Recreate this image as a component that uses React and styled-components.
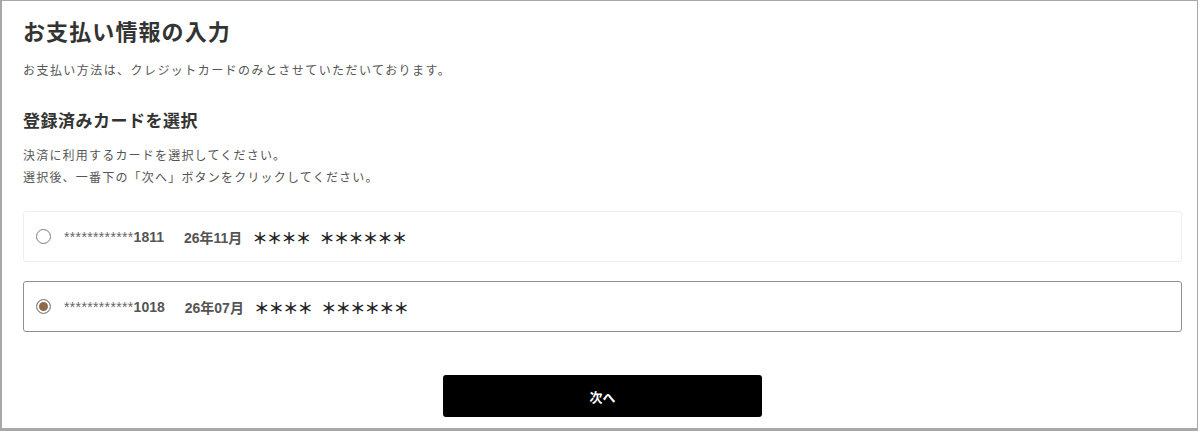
import React, { useState } from "react";
import styled, { createGlobalStyle } from "styled-components";

const GlobalStyle = createGlobalStyle`
  * { box-sizing: border-box; }
  body {
    margin: 0;
    background: #fff;
    font-family: "Noto Sans CJK JP", "Liberation Sans", sans-serif;
  }
`;

const Frame = styled.div`
  width: 1198px;
  height: 431px;
  border-style: solid;
  border-color: #a8a8a8;
  border-width: 1px 1px 3px 2px;
  padding: 14px 15px 0 21px;
  overflow: hidden;
`;

const Title = styled.h1`
  margin: 0;
  font-size: 22px;
  line-height: 30px;
  font-weight: 700;
  letter-spacing: 0.05em;
  color: #333;
`;

const Lead = styled.p`
  margin: 15px 0 0;
  font-size: 12px;
  line-height: 20px;
  letter-spacing: 0.12em;
  color: #555;
`;

const Heading = styled.h2`
  margin: 28px 0 0;
  font-size: 17px;
  line-height: 24px;
  font-weight: 700;
  letter-spacing: 0.03em;
  color: #333;
`;

const Note = styled.p`
  margin: 12px 0 0;
  font-size: 12px;
  line-height: 22px;
  letter-spacing: 0.1em;
  color: #555;
`;

const CardList = styled.div`
  margin-top: 23px;
  display: flex;
  flex-direction: column;
  gap: 19px;
`;

const CardRow = styled.label`
  height: 51px;
  display: flex;
  align-items: center;
  gap: 13px;
  padding: 0 12px;
  border: 1px solid ${(p) => (p.$active ? "#8f8f8f" : "#eeeeee")};
  border-radius: 3px;
  cursor: pointer;
`;

const Radio = styled.input`
  appearance: none;
  margin: 0;
  width: 15px;
  height: 15px;
  border-radius: 50%;
  border: 1px solid #7a7a7a;
  background: #fff;
  flex-shrink: 0;

  &:checked {
    background: #8e6a4c;
    box-shadow: inset 0 0 0 2px #fff;
    border-color: #8a8a8a;
  }
`;

const CardText = styled.span`
  display: flex;
  align-items: center;
  font-family: "Liberation Sans", Arial, sans-serif;
  font-size: 14px;
  font-weight: 700;
  color: #555;
  white-space: pre;
`;

const Mask = styled.span`
  font-weight: 400;
  font-size: 14px;
  color: #666;
  letter-spacing: 0.35px;
`;

const Expiry = styled.span`
  margin-left: 20px;
  font-family: "Liberation Sans", "Noto Sans CJK JP", sans-serif;
`;

const Holder = styled.span`
  margin-left: 10px;
  display: flex;
  gap: 9px;
  font-family: "Noto Sans CJK JP", sans-serif;
  font-size: 15.5px;
  font-weight: 700;
  color: #222;
  letter-spacing: -1px;
`;

const Actions = styled.div`
  margin-top: 43px;
  display: flex;
  justify-content: center;
`;

const NextButton = styled.button`
  width: 319px;
  height: 42px;
  border: none;
  border-radius: 3px;
  background: #000;
  color: #fff;
  font-family: "Noto Sans CJK JP", sans-serif;
  font-size: 13px;
  font-weight: 700;
  cursor: pointer;
`;

const cards = [
  { id: "1811", last: "1811", exp: "26年11月" },
  { id: "1018", last: "1018", exp: "26年07月" },
];

export default function App() {
  const [selected, setSelected] = useState("1018");

  return (
    <>
      <GlobalStyle />
      <Frame>
        <Title>お支払い情報の入力</Title>
        <Lead>お支払い方法は、クレジットカードのみとさせていただいております。</Lead>

        <Heading>登録済みカードを選択</Heading>
        <Note>
          決済に利用するカードを選択してください。
          <br />
          選択後、一番下の「次へ」ボタンをクリックしてください。
        </Note>

        <CardList>
          {cards.map((c) => (
            <CardRow key={c.id} $active={selected === c.id}>
              <Radio
                type="radio"
                name="card"
                checked={selected === c.id}
                onChange={() => setSelected(c.id)}
              />
              <CardText>
                <Mask>************</Mask>
                {c.last}
                <Expiry>{c.exp}</Expiry>
                <Holder>
                  <span>＊＊＊＊</span>
                  <span>＊＊＊＊＊＊</span>
                </Holder>
              </CardText>
            </CardRow>
          ))}
        </CardList>

        <Actions>
          <NextButton>次へ</NextButton>
        </Actions>
      </Frame>
    </>
  );
}
